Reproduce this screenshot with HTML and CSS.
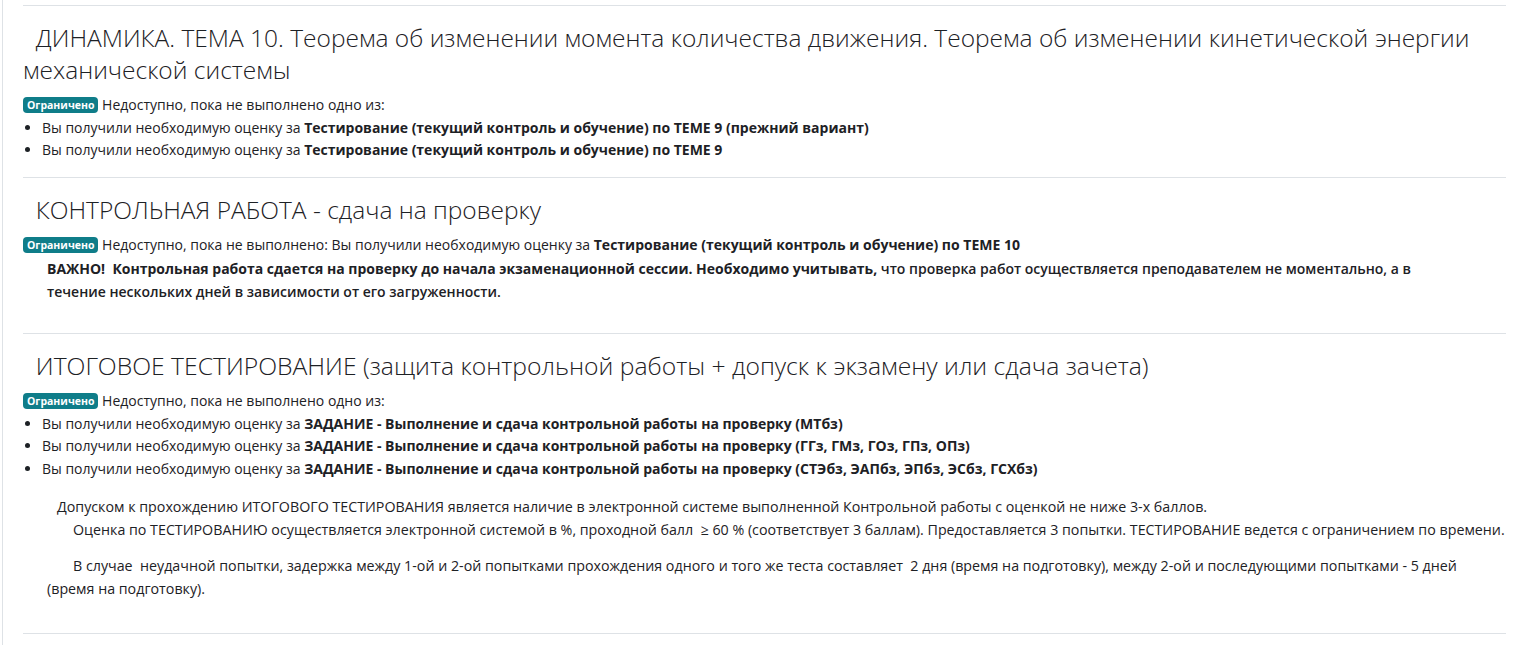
FILE: index.html
```html
<!DOCTYPE html>
<html lang="ru">
<head>
<meta charset="utf-8">
<link rel="stylesheet" href="styles.css">
</head>
<body>
<div class="page">
  <ul class="sections">
    <li class="section">
      <h3 class="title">&nbsp; ДИНАМИКА. ТЕМА 10. Теорема об изменении момента количества движения. Теорема об изменении кинетической энергии механической системы</h3>
      <div class="avail"><span class="badge">Ограничено</span> Недоступно, пока не выполнено одно из:</div>
      <ul class="conds">
        <li>Вы получили необходимую оценку за <b>Тестирование (текущий контроль и обучение) по ТЕМЕ 9 (прежний вариант)</b></li>
        <li>Вы получили необходимую оценку за <b>Тестирование (текущий контроль и обучение) по ТЕМЕ 9</b></li>
      </ul>
    </li>
    <li class="section">
      <h3 class="title">&nbsp; КОНТРОЛЬНАЯ РАБОТА - сдача на проверку</h3>
      <div class="avail"><span class="badge">Ограничено</span> Недоступно, пока не выполнено: Вы получили необходимую оценку за <b>Тестирование (текущий контроль и обучение) по ТЕМЕ 10</b></div>
      <p class="important"><b>ВАЖНО!&nbsp; Контрольная работа сдается на проверку до начала экзаменационной сессии. Необходимо учитывать,</b> что проверка работ осуществляется преподавателем не моментально, а в течение нескольких дней в зависимости от его загруженности.</p>
    </li>
    <li class="section">
      <h3 class="title wide">&nbsp; ИТОГОВОЕ ТЕСТИРОВАНИЕ (защита контрольной работы + допуск к экзамену или сдача зачета)</h3>
      <div class="avail"><span class="badge">Ограничено</span> Недоступно, пока не выполнено одно из:</div>
      <ul class="conds">
        <li>Вы получили необходимую оценку за <b>ЗАДАНИЕ - Выполнение и сдача контрольной работы на проверку (МТбз)</b></li>
        <li>Вы получили необходимую оценку за <b>ЗАДАНИЕ - Выполнение и сдача контрольной работы на проверку (ГГз, ГМз, ГОз, ГПз, ОПз)</b></li>
        <li>Вы получили необходимую оценку за <b>ЗАДАНИЕ - Выполнение и сдача контрольной работы на проверку (СТЭбз, ЭАПбз, ЭПбз, ЭСбз, ГСХбз)</b></li>
      </ul>
      <div class="summary">
        <p class="p1">Допуском к прохождению ИТОГОВОГО ТЕСТИРОВАНИЯ является наличие в электронной системе выполненной Контрольной работы с оценкой не ниже 3-х баллов.</p>
        <p class="p2">Оценка по ТЕСТИРОВАНИЮ осуществляется электронной системой в %, проходной балл&nbsp; ≥ 60 % (соответствует 3 баллам). Предоставляется 3 попытки. ТЕСТИРОВАНИЕ ведется с ограничением по времени.</p>
        <p class="p3">В случае&nbsp; неудачной попытки, задержка между 1-ой и 2-ой попытками прохождения одного и того же теста составляет&nbsp; 2 дня (время на подготовку), между 2-ой и последующими попытками - 5 дней (время на подготовку).</p>
      </div>
    </li>
  </ul>
</div>
</body>
</html>
```
FILE: styles.css
```css
html, body {
  margin: 0;
  padding: 0;
  background: #fff;
}
body {
  font-family: "Open Sans", "Liberation Sans", sans-serif;
  font-size: 14px;
  color: #1d2125;
}
.page {
  margin-left: 2px;
  border-left: 1px solid #dee2e6;
  min-height: 645px;
  padding: 5px 16px 0 20px;
}
.sections {
  list-style: none;
  margin: 0;
  padding: 0;
  border-top: 1px solid #dee2e6;
}
.section {
  border-bottom: 1px solid #dee2e6;
  padding: 16px 0 15px;
}
.title {
  margin: 0 0 8px;
  font-weight: 300;
  font-size: 24.5px;
  line-height: 32px;
  color: #1d2125;
}
.title.wide {
  font-size: 24.7px;
}
.avail {
  line-height: 22.5px;
}
.badge {
  display: inline-block;
  background: #0f7d89;
  color: #fff;
  font-weight: 700;
  font-size: 10.5px;
  line-height: 16px;
  padding: 0 4px;
  border-radius: 4px;
  vertical-align: 1px;
}
.conds {
  list-style: disc;
  margin: 0;
  padding-left: 19px;
  line-height: 22.5px;
}
.important {
  margin: 2px 0 15px;
  padding: 0 70px 0 24px;
  line-height: 22.5px;
  font-weight: 600;
}
.important b {
  font-weight: 700;
}
.summary {
  margin-top: 16px;
  line-height: 22.5px;
  font-size: 14.25px;
}
.summary p {
  margin: 0;
}
.p1 { padding-left: 34px; }
.p2 { padding-left: 50px; }
.p3 {
  margin-top: 14px !important;
  text-indent: 26px;
  padding: 0 45px 18px 24px;
}
```
